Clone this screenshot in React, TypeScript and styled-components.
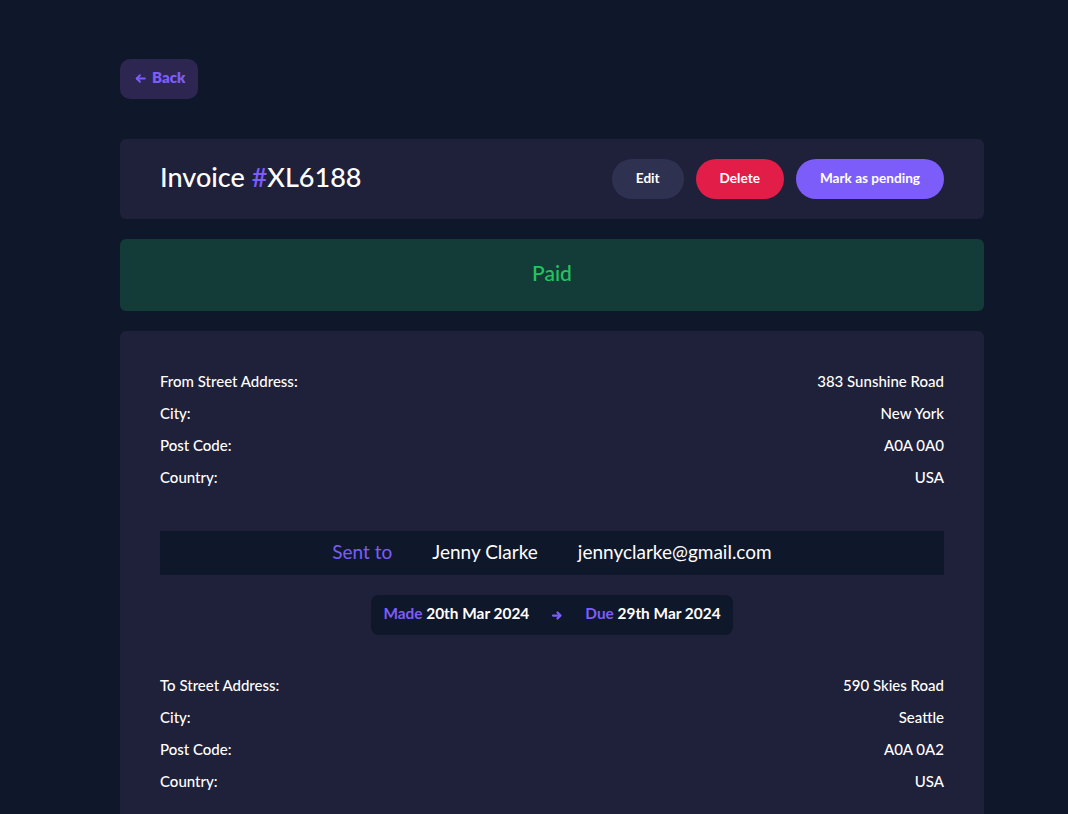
import React from 'react'
import styled, { createGlobalStyle } from 'styled-components'

const GlobalStyle = createGlobalStyle`
    * {
        box-sizing: border-box;
    }

    body {
        margin: 0;
        background: #0f172a;
        font-family: "Lato", "Noto Sans", sans-serif;
        color: #ffffff;
    }
`

type AddressType = {
    label: string
    street: string
    city: string
    postCode: string
    country: string
}

const fromAddress: AddressType = {
    label: 'From Street Address:',
    street: '383 Sunshine Road',
    city: 'New York',
    postCode: 'A0A 0A0',
    country: 'USA',
}

const toAddress: AddressType = {
    label: 'To Street Address:',
    street: '590 Skies Road',
    city: 'Seattle',
    postCode: 'A0A 0A2',
    country: 'USA',
}

const Address = (props: { address: AddressType }) => {
    const rows = [
        [props.address.label, props.address.street],
        ['City:', props.address.city],
        ['Post Code:', props.address.postCode],
        ['Country:', props.address.country],
    ]
    return (
        <AddressList>
            {rows.map(([label, value]) => (
                <AddressRow key={label}>
                    <span>{label}</span>
                    <span>{value}</span>
                </AddressRow>
            ))}
        </AddressList>
    )
}

export default function App() {
    return (
        <>
            <GlobalStyle />
            <Page>
                <BackButton>
                    <svg width="13" height="13" viewBox="0 0 24 24" fill="none" stroke="currentColor" strokeWidth="3.5" strokeLinecap="round" strokeLinejoin="round">
                        <path d="M20 12H5" />
                        <path d="M11 18l-6-6 6-6" />
                    </svg>
                    Back
                </BackButton>

                <HeaderCard>
                    <Title>
                        Invoice <Hash>#</Hash>XL6188
                    </Title>
                    <Actions>
                        <ActionButton variant="edit">Edit</ActionButton>
                        <ActionButton variant="delete">Delete</ActionButton>
                        <ActionButton variant="primary">Mark as pending</ActionButton>
                    </Actions>
                </HeaderCard>

                <StatusBanner>Paid</StatusBanner>

                <DetailsCard>
                    <Address address={fromAddress} />

                    <SentBar>
                        <SentLabel>Sent to</SentLabel>
                        <span>Jenny Clarke</span>
                        <span>jennyclarke@gmail.com</span>
                    </SentBar>

                    <DatePill>
                        <DateItem>
                            <DateLabel>Made</DateLabel> 20th Mar 2024
                        </DateItem>
                        <svg width="12" height="12" viewBox="0 0 24 24" fill="none" stroke="#7c5dfa" strokeWidth="4.5" strokeLinecap="round" strokeLinejoin="round">
                            <path d="M4 13h14" />
                            <path d="M13 7l6 6-6 6" />
                        </svg>
                        <DateItem>
                            <DateLabel>Due</DateLabel> 29th Mar 2024
                        </DateItem>
                    </DatePill>

                    <Address address={toAddress} />
                </DetailsCard>
            </Page>
        </>
    )
}

const Page = styled.main`
    width: 864px;
    margin-left: 120px;
    padding-top: 59px;
    display: flex;
    flex-direction: column;
    align-items: flex-start;
`

const BackButton = styled.button`
    height: 40px;
    padding: 0 13px 4px 14px;
    display: flex;
    align-items: center;
    gap: 5px;
    border: none;
    border-radius: 10px;
    background: #2d2650;
    color: #7c5dfa;
    font-family: inherit;
    font-weight: 800;
    font-size: 15px;

    svg {
        margin-top: 3px;
    }
`

const HeaderCard = styled.section`
    margin-top: 40px;
    width: 100%;
    height: 80px;
    padding: 0 40px;
    display: flex;
    align-items: center;
    justify-content: space-between;
    background: #1f203a;
    border-radius: 6px;
`

const Title = styled.h1`
    margin: 0 0 5px;
    font-size: 27px;
    font-weight: 500;
    color: #ffffff;
`

const Hash = styled.span`
    color: #7c5dfa;
`

const Actions = styled.div`
    display: flex;
    gap: 12px;
`

const buttonColors = {
    edit: '#2f3150',
    delete: '#e11d48',
    primary: '#7c5dfa',
}

const ActionButton = styled.button<{ variant: 'edit' | 'delete' | 'primary' }>`
    height: 40px;
    padding: 0 24px 3px;
    border: none;
    border-radius: 20px;
    background: ${props => buttonColors[props.variant]};
    color: #ffffff;
    font-family: inherit;
    font-weight: 700;
    font-size: 13.6px;
`

const StatusBanner = styled.div`
    margin-top: 20px;
    width: 100%;
    height: 72px;
    padding-bottom: 5px;
    display: flex;
    align-items: center;
    justify-content: center;
    background: #133b38;
    border-radius: 6px;
    color: #22c55e;
    font-size: 21px;
    font-weight: 500;
`

const DetailsCard = styled.section`
    margin-top: 20px;
    width: 100%;
    padding: 40px 40px 40px;
    display: flex;
    flex-direction: column;
    align-items: center;
    background: #1f203a;
    border-radius: 6px 6px 0 0;
`

const AddressList = styled.div`
    width: 100%;
    display: flex;
    flex-direction: column;
    gap: 12px;
`

const AddressRow = styled.div`
    display: flex;
    justify-content: space-between;
    line-height: 20px;
    font-size: 15px;
    font-weight: 500;
    color: #ffffff;
`

const SentBar = styled.div`
    margin-top: 44px;
    width: 100%;
    height: 44px;
    padding-bottom: 3px;
    display: flex;
    align-items: center;
    justify-content: center;
    gap: 40px;
    background: #0f172a;
    font-size: 19px;
    color: #ffffff;
`

const SentLabel = styled.span`
    color: #7c5dfa;
`

const DatePill = styled.div`
    margin-top: 20px;
    margin-bottom: 40px;
    height: 40px;
    padding: 0 12px 4px;
    display: flex;
    align-items: center;
    gap: 22px;
    background: #0f172a;
    border-radius: 8px;

    svg {
        margin-top: 4px;
    }
`

const DateItem = styled.span`
    font-size: 15.4px;
    font-weight: 700;
    color: #ffffff;
`

const DateLabel = styled.span`
    color: #7c5dfa;
`
